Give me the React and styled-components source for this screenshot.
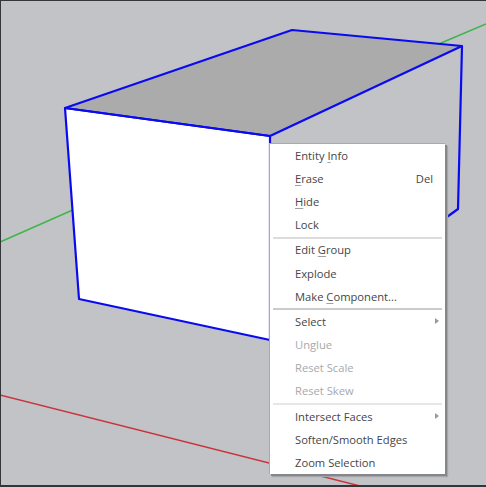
import React from "react";
import styled, { createGlobalStyle } from "styled-components";

const GlobalStyle = createGlobalStyle`
  html, body {
    margin: 0;
    padding: 0;
    background: #c2c3c7;
  }
`;

const Viewport = styled.div`
  position: relative;
  width: 486px;
  height: 487px;
  box-sizing: border-box;
  overflow: hidden;
  background: #c2c3c7;
  border-left: 1px solid #333538;
  border-top: 1px solid #333538;
  border-bottom: 2px solid #333538;
  font-family: "Open Sans", "Liberation Sans", sans-serif;
`;

const Scene = styled.svg`
  position: absolute;
  left: -1px;
  top: -1px;
`;

const Menu = styled.div`
  position: absolute;
  left: 268px;
  top: 142px;
  width: 176px;
  height: 331px;
  box-sizing: border-box;
  padding: 0 3px;
  display: flex;
  flex-direction: column;
  background: #fff;
  border-left: 1px solid #a9aaad;
  border-top: 1px solid #a9aaad;
  box-shadow: 2px 2px 0 #858689, 3px 3px 1px #a5a6a9;
`;

const Group = styled.div`
  flex-shrink: 0;
  display: flex;
  flex-direction: column;
`;

const Item = styled.div`
  height: 23.2px;
  box-sizing: border-box;
  display: flex;
  align-items: center;
  justify-content: space-between;
  padding: 0 9px 1px 22px;
  font-size: 11.2px;
  color: ${(p) => (p.$disabled ? "#a8a9ad" : "#454648")};
  white-space: nowrap;
`;

const Key = styled.span`
  text-decoration: underline;
  text-decoration-thickness: 1px;
  text-underline-offset: 2px;
  text-decoration-color: #a0a0a0;
`;

const Separator = styled.div`
  flex-shrink: 0;
  height: 2px;
  background: ${(p) => p.$tone};
`;

const Arrow = styled.span`
  width: 0;
  height: 0;
  margin-right: -6px;
  border-left: 4px solid #999a9c;
  border-top: 3px solid transparent;
  border-bottom: 3px solid transparent;
`;

function Scene3D() {
  return (
    <Scene width="486" height="487" viewBox="0 0 486 487">
      <line x1="0" y1="242" x2="270" y2="123" stroke="#3db54a" strokeWidth="1.5" />
      <line x1="434" y1="46" x2="486" y2="24" stroke="#3db54a" strokeWidth="1.5" />
      <line x1="0" y1="395" x2="364" y2="487" stroke="#c8343c" strokeWidth="1.5" />
      <polygon points="65,108 292,30 462,46 270,136" fill="#ababab" />
      <polygon points="65,108 270,136 270,340 79,299" fill="#fff" />
      <g fill="none" stroke="#0a0af0" strokeWidth="2.2" strokeLinejoin="round">
        <polygon points="65,108 292,30 462,46 270,136" />
        <polygon points="65,108 270,136 270,340 79,299" />
        <polyline points="462,46 458,209 440,222" />
      </g>
    </Scene>
  );
}

export default function App() {
  return (
    <Viewport>
      <GlobalStyle />
      <Scene3D />
      <Menu>
        <Group>
          <Item>
            <span>Entity <Key>I</Key>nfo</span>
          </Item>
          <Item>
            <span><Key>E</Key>rase</span>
            <span>Del</span>
          </Item>
          <Item>
            <span><Key>H</Key>ide</span>
          </Item>
          <Item>Lock</Item>
        </Group>
        <Separator $tone="#dcdcdc" />
        <Group>
          <Item>
            <span>Edit <Key>G</Key>roup</span>
          </Item>
          <Item>Explode</Item>
          <Item>
            <span>Make <Key>C</Key>omponent...</span>
          </Item>
        </Group>
        <Separator $tone="#cbcbcb" />
        <Group>
          <Item>
            Select
            <Arrow />
          </Item>
          <Item $disabled>Unglue</Item>
          <Item $disabled>Reset Scale</Item>
          <Item $disabled>Reset Skew</Item>
        </Group>
        <Separator $tone="#e6e6e6" />
        <Group>
          <Item>
            Intersect Faces
            <Arrow />
          </Item>
          <Item>Soften/Smooth Edges</Item>
          <Item>Zoom Selection</Item>
        </Group>
      </Menu>
    </Viewport>
  );
}
